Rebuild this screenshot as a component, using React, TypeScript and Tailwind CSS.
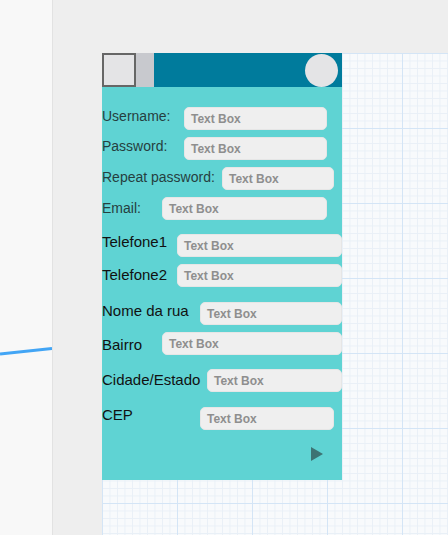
const rows = [
  { label: 'Username:', lw: 'w-[82px]', bw: 'w-[143px]', mt: 'mt-[20px]', lt: 'mt-[1px]', tone: 'dim' },
  { label: 'Password:', lw: 'w-[82px]', bw: 'w-[143px]', mt: 'mt-[7px]', lt: 'mt-[1px]', tone: 'dim' },
  { label: 'Repeat password:', lw: 'w-[120px]', bw: 'w-[112px]', mt: 'mt-[7px]', lt: 'mt-[2px]', tone: 'dim' },
  { label: 'Email:', lw: 'w-[60px]', bw: 'w-[165px]', mt: 'mt-[7px]', lt: 'mt-[3px]', tone: 'dim' },
  { label: 'Telefone1', lw: 'w-[75px]', bw: 'w-[165px]', mt: 'mt-[14px]', lt: '-mt-[1px]', tone: 'dark' },
  { label: 'Telefone2', lw: 'w-[75px]', bw: 'w-[165px]', mt: 'mt-[7px]', lt: 'mt-[2px]', tone: 'dark' },
  { label: 'Nome da rua', lw: 'w-[98px]', bw: 'w-[142px]', mt: 'mt-[15px]', lt: 'mt-0', tone: 'dark' },
  { label: 'Bairro', lw: 'w-[60px]', bw: 'w-[180px]', mt: 'mt-[7px]', lt: 'mt-[4px]', tone: 'dark' },
  { label: 'Cidade/Estado', lw: 'w-[105px]', bw: 'w-[135px]', mt: 'mt-[14px]', lt: 'mt-[2px]', tone: 'dark' },
  { label: 'CEP', lw: 'w-[98px]', bw: 'w-[134px]', mt: 'mt-[15px]', lt: '-mt-[1px]', tone: 'dark' },
];

function TextBox({ width }: { width: string }) {
  return (
    <div className={`${width} h-[23px] shrink-0 rounded-[5px] border border-[#e6e6e6] bg-[#efefef] pl-[6px] flex items-center`}>
      <span className="text-[12px] font-bold text-[#8e8e8e] leading-none">Text Box</span>
    </div>
  );
}

export default function App() {
  return (
    <div className="flex h-[535px] w-[448px] overflow-hidden font-['Liberation_Sans',Arial,sans-serif]">
      {/* Left sidebar with connector */}
      <div className="w-[53px] shrink-0 border-r border-[#e2e2e2] bg-[#f8f8f8]">
        <svg width="52" height="535" viewBox="0 0 52 535">
          <line x1="0" y1="354" x2="52" y2="348.5" stroke="#42a5f5" strokeWidth="3" />
        </svg>
      </div>

      {/* Workspace */}
      <div className="flex-1 bg-[#eeeeee] pt-[53px] pl-[49px]">
        <div className="h-full w-full bg-[#f8fafc] bg-[linear-gradient(to_right,#d4e5f6_1px,transparent_1px),linear-gradient(to_bottom,#d4e5f6_1px,transparent_1px),linear-gradient(to_right,#e9f0f7_1px,transparent_1px),linear-gradient(to_bottom,#e9f0f7_1px,transparent_1px)] bg-[size:75px_75px,75px_75px,7.5px_7.5px,7.5px_7.5px]">
          {/* Phone mockup */}
          <div className="w-[240px] h-[427px] flex flex-col">
            {/* Header */}
            <div className="h-[34px] flex shrink-0">
              <div className="w-[34px] h-[34px] border-2 border-[#666666] bg-[#e4e4e6]" />
              <div className="w-[18px] bg-[#c8c9ce]" />
              <div className="flex-1 bg-[#007b9c] flex justify-end items-center pr-[4px]">
                <div className="w-[33px] h-[33px] rounded-full bg-[#e4e4e6]" />
              </div>
            </div>

            {/* Body */}
            <div className="flex-1 bg-[#5fd3d3] flex flex-col">
              {rows.map((r) => (
                <div key={r.label} className={`flex items-start ${r.mt}`}>
                  <span
                    className={`${r.lw} ${r.lt} shrink-0 whitespace-nowrap ${
                      r.tone === 'dim'
                        ? 'text-[14px] leading-[16px] text-[#263f3f]'
                        : 'text-[15px] leading-[17px] text-[#111111]'
                    }`}
                  >
                    {r.label}
                  </span>
                  <TextBox width={r.bw} />
                </div>
              ))}
              <div className="flex justify-end pr-[19px] mt-[17px]">
                <svg width="12" height="14" viewBox="0 0 12 14">
                  <polygon points="0,0 12,7 0,14" fill="#3d7474" />
                </svg>
              </div>
            </div>
          </div>
        </div>
      </div>
    </div>
  );
}
